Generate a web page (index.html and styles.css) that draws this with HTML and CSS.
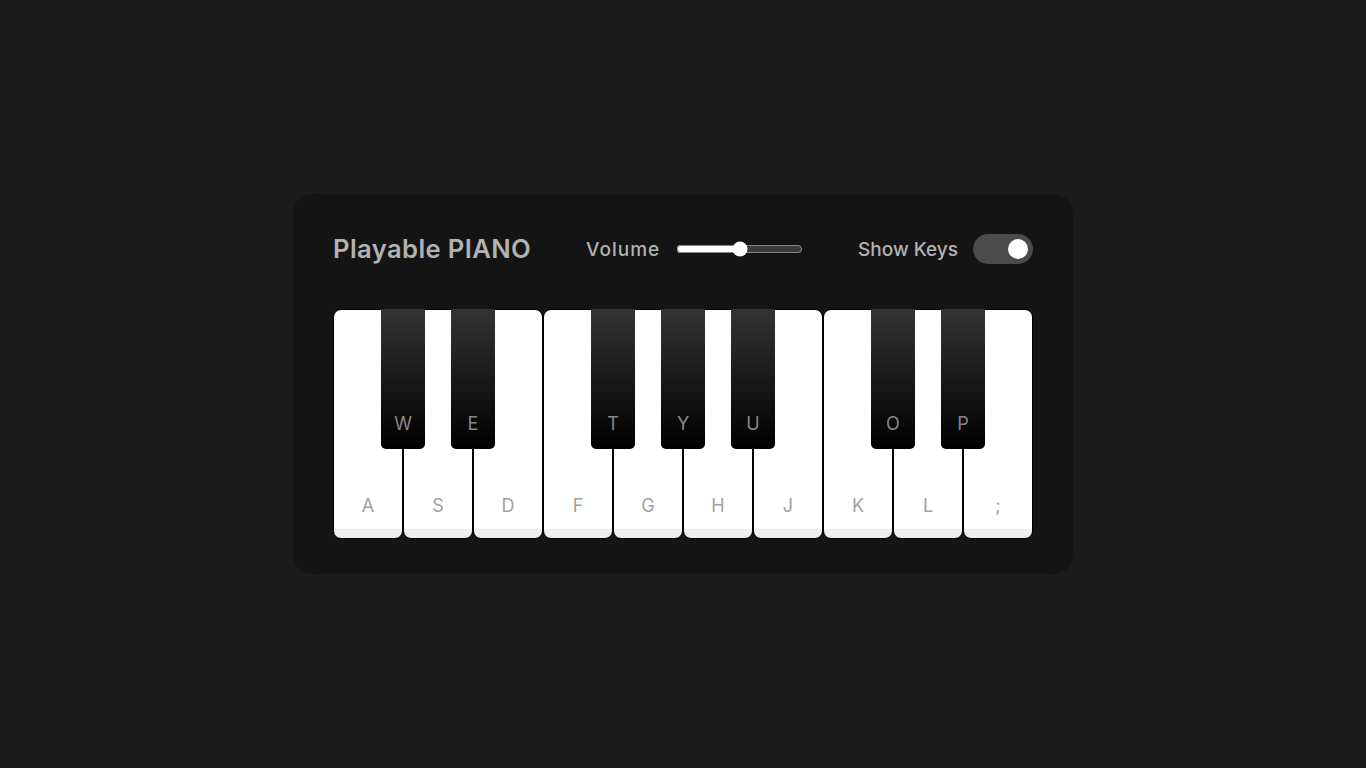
FILE: index.html
```html
<!DOCTYPE html>
<html lang="en">
<head>
<meta charset="utf-8">
<title>Playable Piano</title>
<link rel="stylesheet" href="styles.css">
</head>
<body>
<div class="wrapper">
  <header>
    <h2>Playable PIANO</h2>
    <div class="column volume-slider">
      <span>Volume</span><input type="range" min="0" max="1" value="0.5" step="any">
    </div>
    <div class="column keys-checkbox">
      <span>Show Keys</span><input type="checkbox" checked>
    </div>
  </header>
  <ul class="piano-keys">
    <li class="key white"><span>a</span></li>
    <li class="key black"><span>w</span></li>
    <li class="key white"><span>s</span></li>
    <li class="key black"><span>e</span></li>
    <li class="key white"><span>d</span></li>
    <li class="key white"><span>f</span></li>
    <li class="key black"><span>t</span></li>
    <li class="key white"><span>g</span></li>
    <li class="key black"><span>y</span></li>
    <li class="key white"><span>h</span></li>
    <li class="key black"><span>u</span></li>
    <li class="key white"><span>j</span></li>
    <li class="key white"><span>k</span></li>
    <li class="key black"><span>o</span></li>
    <li class="key white"><span>l</span></li>
    <li class="key black"><span>p</span></li>
    <li class="key white"><span>;</span></li>
  </ul>
</div>
</body>
</html>
```
FILE: styles.css
```css
* {
  margin: 0;
  padding: 0;
  box-sizing: border-box;
}
body {
  font-family: "Inter", "Open Sans", sans-serif;
  display: flex;
  align-items: center;
  justify-content: center;
  min-height: 100vh;
  background: #1b1b1b;
}
.wrapper {
  padding: 35px 40px;
  border-radius: 20px;
  background: #141414;
}
header {
  display: flex;
  color: #b2b2b2;
  align-items: center;
  justify-content: space-between;
  height: 40px;
}
header h2 {
  font-size: 25.6px;
  font-weight: 600;
  line-height: 38.4px;
  letter-spacing: 0.4px;
}
.column {
  display: flex;
  align-items: center;
}
.column span {
  font-weight: 500;
  margin-right: 15px;
  font-size: 19px;
}
.volume-slider span {
  letter-spacing: 1px;
  margin-right: 16px;
}
.volume-slider input {
  accent-color: #fff;
  width: 127px;
  margin: 0;
}
.keys-checkbox input {
  height: 30px;
  width: 60px;
  appearance: none;
  position: relative;
  background: #4b4b4b;
  border-radius: 30px;
  outline: none;
  margin: 0;
}
.keys-checkbox input::before {
  content: "";
  position: absolute;
  top: 50%;
  left: 35px;
  width: 20px;
  height: 20px;
  border-radius: 50%;
  background: #fff;
  transform: translateY(-50%);
}
.piano-keys {
  display: flex;
  list-style: none;
  margin-top: 40px;
}
.key {
  position: relative;
  text-transform: uppercase;
}
.black {
  z-index: 2;
  width: 44px;
  height: 140px;
  margin: 0 -22px;
  border-radius: 0 0 5px 5px;
  background: linear-gradient(#333, #000);
}
.white {
  height: 230px;
  width: 70px;
  border-radius: 8px;
  border: 1px solid #000;
  background: linear-gradient(#fff 96%, #eee 4%);
}
.key span {
  position: absolute;
  bottom: 19px;
  width: 100%;
  color: #a2a2a2;
  font-size: 18px;
  line-height: 27px;
  text-align: center;
}
.black span {
  bottom: 12px;
  color: #888;
}
```
